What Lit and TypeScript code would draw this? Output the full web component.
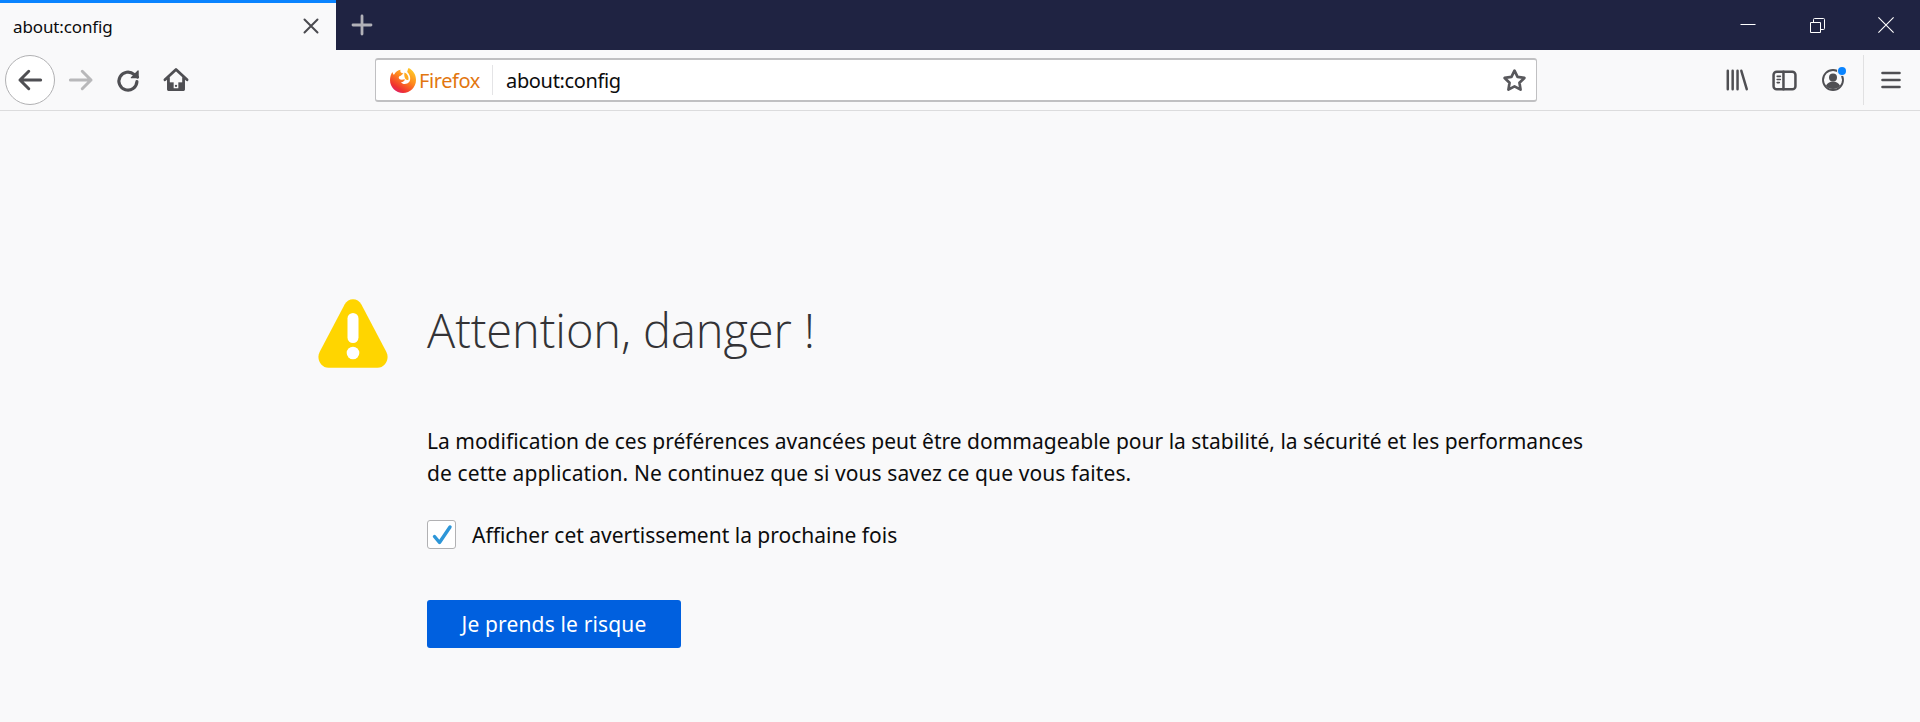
import { LitElement, html, css, svg } from "lit";
import { customElement } from "lit/decorators.js";

const ico = (size: number, body: unknown, cls = "") =>
  html`<svg class=${cls} width=${size} height=${size} viewBox="0 0 24 24" fill="none" stroke="currentColor" stroke-width="2.4" stroke-linecap="round" stroke-linejoin="round">${body}</svg>`;

@customElement("app-root")
export class AppRoot extends LitElement {
  static styles = css`
    :host { display: block; width: 1920px; height: 722px; overflow: hidden; background: #f9f9fa; font-family: "Noto Sans", "Open Sans", sans-serif; color: #0c0c0d; }
    .tabbar { height: 50px; background: #1f2342; display: flex; align-items: stretch; color: #fff; }
    .tab { width: 336px; box-sizing: border-box; border-top: 3px solid #0a84ff; background: #f9f9fa; color: #0c0c0d; display: flex; align-items: center; justify-content: space-between; padding: 0 17px 1px 13px; font-size: 17px; letter-spacing: -0.12px; }
    .tab svg { color: #4a4a4f; }
    .newtab { width: 50px; display: flex; align-items: center; justify-content: center; color: #b1b1b8; padding-left: 2px; box-sizing: border-box; }
    .spacer { flex: 1; }
    .win { display: flex; align-items: center; }
    .win button { all: unset; width: 60px; height: 50px; display: flex; align-items: center; justify-content: center; }
    .win button + button { margin-left: 9px; }
    .winwrap { padding-right: 4px; display: flex; }
    .toolbar { height: 61px; box-sizing: border-box; border-bottom: 1px solid #dcdcdd; display: flex; align-items: center; padding-left: 5px; color: #4f4f53; position: relative; }
    .back { width: 50px; height: 50px; box-sizing: border-box; border: 1px solid #b1b1b3; border-radius: 50%; background: #fff; display: flex; align-items: center; justify-content: center; color: #4f4f53; }
    .nav { width: 32px; height: 32px; display: flex; align-items: center; justify-content: center; }
    .fwd { color: #b8b8ba; margin-left: 10px; }
    .reload { margin-left: 15px; }
    .home { margin-left: 16px; }
    .urlbar { margin-left: 183px; width: 1162px; height: 44px; box-sizing: border-box; border: 1px solid #c0c0c2; border-width: 2px 1px; border-radius: 3px; background: #fff; display: flex; align-items: center; padding: 0 8px 0 13px; font-size: 20px; }
    .brand { color: #e2760f; display: flex; align-items: center; gap: 2px; font-size: 20px; letter-spacing: -0.4px; padding-right: 12px; border-right: 1px solid #e4e4e6; height: 30px; }
    .urltext { padding-left: 13px; letter-spacing: -0.35px; flex: 1; color: #0c0c0d; }
    .star { color: #58585c; display: flex; }
    .right { margin-left: auto; display: flex; align-items: center; padding-right: 19px; gap: 0; height: 100%; }
    .rico { width: 48px; display: flex; align-items: center; justify-content: center; position: relative; }
    .lib { left: 1px; }
    .acct { left: 1px; }
    .dot { position: absolute; width: 8px; height: 8px; border-radius: 50%; background: #0a84ff; box-shadow: 0 0 0 1px #f9f9fa; top: -1px; right: 11px; }
    .sep { width: 1px; height: 50px; background: #e1e1e2; margin: 0 17px 0 7px; }
    .main { padding: 187px 0 0 318px; display: grid; grid-template-columns: 109px auto; justify-content: start; }
    .warn { display: block; margin-top: 1px; }
    h1 { margin: 0; height: 70px; padding-bottom: 7px; box-sizing: border-box; display: flex; align-items: center; font-family: "Open Sans", sans-serif; font-weight: 300; font-size: 47px; color: #333336; letter-spacing: -0.1px; }
    .body { grid-column: 2; }
    p { margin: 56px 0 0; font-size: 21px; line-height: 32px; white-space: nowrap; color: #0c0c0d; }
    .l2 { letter-spacing: 0.1px; }
    .check { display: flex; align-items: center; margin-top: 31px; font-size: 21px; gap: 16px; }
    .box { width: 29px; height: 29px; box-sizing: border-box; border: 1px solid #b1b1b3; border-radius: 3px; background: #fff; display: flex; align-items: center; justify-content: center; color: #2d96d8; }
    .cta { all: unset; display: flex; align-items: center; justify-content: center; margin-top: 51px; width: 254px; height: 48px; border-radius: 3px; background: #0060df; color: #fff; font-size: 21px; letter-spacing: 0.15px; }
  `;

  render() {
    return html`
      <div class="tabbar">
        <div class="tab">
          <span>about:config</span>
          <svg width="16" height="16" viewBox="0 0 16 16" stroke="currentColor" stroke-width="2" stroke-linecap="round"><path d="M1.500 1.500l13 13M14.500 1.500l-13 13"/></svg>
        </div>
        <div class="newtab"><svg width="22" height="22" viewBox="0 0 22 22" stroke="currentColor" stroke-width="2.8" stroke-linecap="round"><path d="M11 2v18M2 11h18"/></svg></div>
        <div class="spacer"></div>
        <div class="winwrap">
          <div class="win">
            <button aria-label="Réduire"><svg width="16" height="16" viewBox="0 0 16 16" stroke="#fff" stroke-width="1"><path d="M0.500 7.500h15"/></svg></button>
            <button aria-label="Restaurer"><svg width="15" height="15" viewBox="0 0 15 15" fill="none" stroke="#fff" stroke-width="1"><path d="M.5 4.500h10v10H.5zM3.500 4.500V1.500a1 1 0 0 1 1-1h9a1 1 0 0 1 1 1v9a1 1 0 0 1-1 1h-3"/></svg></button>
            <button aria-label="Fermer"><svg width="16" height="16" viewBox="0 0 16 16" stroke="#fff" stroke-width="1.1"><path d="M.4.4l15.200 15.200M15.600.4L.4 15.600"/></svg></button>
          </div>
        </div>
      </div>
      <div class="toolbar">
        <div class="back">${ico(30, svg`<path d="M20.500 12H4M11 5l-7 7 7 7"/>`)}</div>
        <div class="nav fwd">${ico(30, svg`<path d="M3.500 12H20M13 5l7 7-7 7"/>`)}</div>
        <div class="nav reload">${ico(27, svg`<path d="M19.500 13a8 8 0 1 1-2.600-6.400L20 9" stroke-width="2.800"/><path d="M20.500 3.600V9.500h-5.900z" fill="currentColor" stroke-width="1.200"/>`)}</div>
        <div class="nav home">
          <svg width="28" height="28" viewBox="0 0 24 24">
            <path d="M2.500 11.800L12 3l9.500 8.800M5.500 10v10.200h13V10" fill="none" stroke="currentColor" stroke-width="2.400" stroke-linecap="round" stroke-linejoin="round"/>
            <path fill="currentColor" d="M5.500 14h13v7h-13z"/>
            <path fill="#f9f9fa" d="M10 12.500a1 1 0 0 1 1-1h2a1 1 0 0 1 1 1V19h-4z"/>
            <circle cx="12" cy="17" r="1" fill="currentColor"/>
          </svg>
        </div>
        <div class="urlbar">
          <span class="brand">
            <svg width="28" height="28" viewBox="0 0 28 28">
              <defs>
                <linearGradient id="fx" x1="0.85" y1="0" x2="0.2" y2="1"><stop offset="0" stop-color="#ffd02a"/><stop offset=".42" stop-color="#ff8a1c"/><stop offset=".8" stop-color="#f0332f"/><stop offset="1" stop-color="#d81b78"/></linearGradient>
              </defs>
              <path fill="url(#fx)" d="M19.500 2 C24 4 27 8.500 27 14 C27 21.200 21.200 27 14 27 C6.800 27 1 21.200 1 14 C1 11.200 1.800 8.200 3.500 6 C3.700 7.500 4.300 8.500 5 8.800 C6.500 5.700 9 4 11.500 3.700 C10.800 5.500 11.800 7 14.500 7.500 C13 8.500 12 9.800 11 10 C10 10.200 9.400 11.500 10 12.500 C10.800 14 13.500 13.700 15.800 13.300 C15.800 15 14 16.300 12 16.200 C13.500 18.500 18 18.700 20.300 15.800 C22.200 13 21 8.500 18.200 6 C18.500 4.500 19 3 19.500 2Z"/>
              <path fill="#ffab1f" d="M15.500 6.500 C18 7.500 20 10.500 19.500 13.500 C18.800 14.500 17 14 16.200 12.500 C15.300 11 15 8.500 15.500 6.500Z"/>
            </svg>
            Firefox
          </span>
          <span class="urltext">about:config</span>
          <span class="star">${ico(27, svg`<path d="M12 3.200l2.700 5.600 6.100.9-4.400 4.300 1 6.100-5.400-2.900-5.400 2.900 1-6.100-4.400-4.300 6.100-.9z"/>`)}</span>
        </div>
        <div class="right">
          <div class="rico lib">${ico(26, svg`<path d="M3.500 3.500v17M8 3.500v17M12.500 3.500v17M16 3.500l5 17" stroke-width="2.300"/>`)}</div>
          <div class="rico"><svg width="25" height="25" viewBox="0 0 24 24" fill="none" stroke="currentColor" stroke-width="2.400" stroke-linecap="round"><rect x="1.500" y="3.500" width="21" height="17" rx="3"/><path d="M11 3.500v17"/><path d="M5 8h3M5 11h3M5 14h2" stroke-width="1.600"/></svg></div>
          <div class="rico acct">
            <svg width="24" height="24" viewBox="0 0 24 24" fill="none" stroke="currentColor" stroke-width="1.900"><circle cx="12" cy="12" r="10"/><circle cx="12" cy="9.500" r="4" fill="currentColor" stroke="none"/><path d="M4.800 18c1.400-3 4-4.500 7.200-4.500s5.800 1.500 7.200 4.500c-2 2-4.500 3-7.200 3s-5.200-1-7.200-3z" fill="currentColor" stroke="none"/></svg>
            <span class="dot"></span>
          </div>
          <div class="sep"></div>
          <svg width="20" height="20" viewBox="0 0 20 20" stroke="currentColor" stroke-width="2.600" stroke-linecap="round"><path d="M1.500 3h17M1.500 10h17M1.500 17h17"/></svg>
        </div>
      </div>
      <div class="main">
        <svg class="warn" width="70" height="70" viewBox="0 0 70 70">
          <path fill="#ffd500" d="M26.600 5.500c3.800-7 13-7 16.800 0l25 47.500C72 60 67 68.700 59.500 68.700h-49C3 68.700-2 60 1.600 53z"/>
          <rect x="29.500" y="14" width="11" height="30" rx="5.500" fill="#fff"/>
          <circle cx="35" cy="54" r="6.300" fill="#fff"/>
        </svg>
        <h1>Attention, danger !</h1>
        <div class="body">
          <p>La modification de ces préférences avancées peut être dommageable pour la stabilité, la sécurité et les performances<br><span class="l2">de cette application. Ne continuez que si vous savez ce que vous faites.</span></p>
          <label class="check">
            <span class="box"><svg width="24" height="24" viewBox="0 0 24 24" fill="none" stroke="currentColor" stroke-width="3.400" stroke-linecap="round" stroke-linejoin="round"><path d="M4.500 13.500l5 6L20 4"/></svg></span>
            Afficher cet avertissement la prochaine fois
          </label>
          <button class="cta">Je prends le risque</button>
        </div>
      </div>
    `;
  }
}
